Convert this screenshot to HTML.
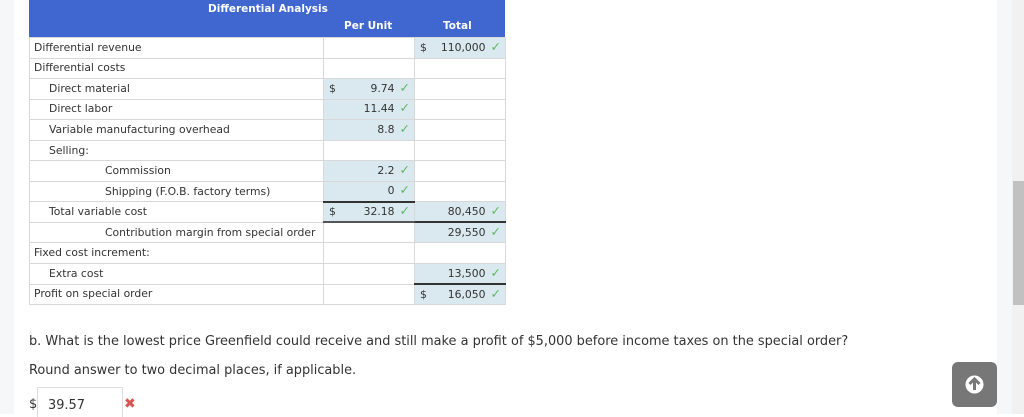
<!DOCTYPE html>
<html><head><style>
*{margin:0;padding:0;box-sizing:border-box}
body{width:1024px;height:414px;overflow:hidden;background:#fff;font-family:"DejaVu Sans","Liberation Sans",sans-serif;color:#333;position:relative}
.lg{position:absolute;left:0;top:0;width:14px;height:414px;background:#f6f7f8}
.rg{position:absolute;left:997px;top:0;width:15px;height:414px;background:#f6f7f8}
.sb{position:absolute;left:1012px;top:0;width:12px;height:414px;background:#f1f1f1}
.th{position:absolute;left:1013px;top:181px;width:11px;height:124px;background:#c1c1c1}
.hdr{position:absolute;left:29px;top:0;width:476px;height:37px;background:#4066d0;color:#fff;font-weight:bold;font-size:10.5px}
table{position:absolute;left:29px;top:37px;border-collapse:collapse;font-size:10.8px;width:476px;table-layout:fixed}
tr{height:20.55px}
td{height:20.55px;border:1px solid #d8d8d8;padding:0 4px;white-space:nowrap;line-height:18px;overflow:visible}
td.l{width:294px}
td.p,td.t{width:91px;text-align:right;position:relative}
.f{background:#dae9ef}
.d{position:absolute;left:5px}
.c{color:#5cb85c;font-weight:bold;margin-left:5px;font-size:12.5px;line-height:0;vertical-align:0}
.bt{border-top:2px solid #333}
.bb{border-bottom:2px solid #555}
.q{position:absolute;left:29px;font-size:12.9px;color:#333}
.btn{position:absolute;left:952px;top:362px;width:45px;height:45px;border-radius:6px;background:#777}
</style></head><body>
<div class="lg"></div><div class="rg"></div><div class="sb"></div><div class="th"></div>
<div class="hdr"><div style="position:absolute;left:179px;top:3px">Differential Analysis</div><div style="position:absolute;left:315px;top:20px">Per Unit</div><div style="position:absolute;left:414px;top:20px">Total</div></div>
<table>
<tr><td class="l">Differential revenue</td><td class="p"></td><td class="t f"><span class="d">$</span>110,000<span class="c">✓</span></td></tr>
<tr><td class="l">Differential costs</td><td class="p"></td><td class="t"></td></tr>
<tr><td class="l" style="padding-left:19px">Direct material</td><td class="p f"><span class="d">$</span>9.74<span class="c">✓</span></td><td class="t"></td></tr>
<tr><td class="l" style="padding-left:19px">Direct labor</td><td class="p f">11.44<span class="c">✓</span></td><td class="t"></td></tr>
<tr><td class="l" style="padding-left:19px">Variable manufacturing overhead</td><td class="p f">8.8<span class="c">✓</span></td><td class="t"></td></tr>
<tr><td class="l" style="padding-left:19px">Selling:</td><td class="p"></td><td class="t"></td></tr>
<tr><td class="l" style="padding-left:75px">Commission</td><td class="p f">2.2<span class="c">✓</span></td><td class="t"></td></tr>
<tr><td class="l" style="padding-left:75px">Shipping (F.O.B. factory terms)</td><td class="p f">0<span class="c">✓</span></td><td class="t"></td></tr>
<tr><td class="l" style="padding-left:19px">Total variable cost</td><td class="p f bt bb"><span class="d">$</span>32.18<span class="c">✓</span></td><td class="t f">80,450<span class="c">✓</span></td></tr>
<tr><td class="l" style="padding-left:75px">Contribution margin from special order</td><td class="p"></td><td class="t f bt">29,550<span class="c">✓</span></td></tr>
<tr><td class="l">Fixed cost increment:</td><td class="p"></td><td class="t"></td></tr>
<tr><td class="l" style="padding-left:19px">Extra cost</td><td class="p"></td><td class="t f">13,500<span class="c">✓</span></td></tr>
<tr><td class="l">Profit on special order</td><td class="p"></td><td class="t f bt"><span class="d">$</span>16,050<span class="c">✓</span></td></tr>
</table>
<div class="q" style="top:334px">b. What is the lowest price Greenfield could receive and still make a profit of $5,000 before income taxes on the special order?</div>
<div class="q" style="top:363px">Round answer to two decimal places, if applicable.</div>
<div class="q" style="top:397px">$</div>
<div style="position:absolute;left:37px;top:387px;width:86px;height:30px;border:1px solid #ddd;border-bottom:none;font-size:12.9px;padding:10px 0 0 10px">39.57</div>
<div style="position:absolute;left:124px;top:396px;color:#d9534f;font-weight:bold;font-size:14px">✖</div>
<div class="btn"><svg width="45" height="45" viewBox="0 0 45 45"><circle cx="22.5" cy="22.5" r="9" fill="#fff"/><path d="M22.5 17v11M17.5 22l5-5 5 5" stroke="#777" stroke-width="3" fill="none"/></svg></div>
</body></html>
